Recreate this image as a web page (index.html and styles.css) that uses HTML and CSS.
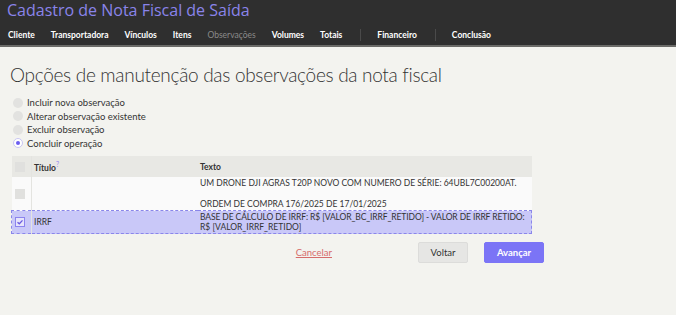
FILE: index.html
```html
<!DOCTYPE html>
<html lang="pt-BR">
<head>
    <meta charset="UTF-8">
    <meta name="viewport" content="width=device-width, initial-scale=1.0">
    <title>Cadastro de Nota Fiscal de Saída</title>
    <link rel="stylesheet" href="styles.css">
</head>
<body>
    <div class="topbar">
        <div class="app-title">Cadastro de Nota Fiscal de Saída</div>
        <nav class="tabs">
            <a class="tab">Cliente</a>
            <a class="tab">Transportadora</a>
            <a class="tab">Vínculos</a>
            <a class="tab">Itens</a>
            <a class="tab current">Observações</a>
            <a class="tab">Volumes</a>
            <a class="tab">Totais</a>
            <span class="sep"></span>
            <a class="tab">Financeiro</a>
            <span class="sep"></span>
            <a class="tab">Conclusão</a>
        </nav>
    </div>

    <div class="content">
        <h1>Opções de manutenção das observações da nota fiscal</h1>

        <div class="options">
            <label class="option"><span class="radio"></span>Incluir nova observação</label>
            <label class="option"><span class="radio"></span>Alterar observação existente</label>
            <label class="option"><span class="radio"></span>Excluir observação</label>
            <label class="option"><span class="radio on"></span>Concluir operação</label>
        </div>

        <table class="grid">
            <thead>
                <tr>
                    <th class="chk"><span class="box"></span></th>
                    <th class="col-title">Título<sup>?</sup></th>
                    <th>Texto</th>
                </tr>
            </thead>
            <tbody>
                <tr>
                    <td class="chk"><span class="box"></span></td>
                    <td></td>
                    <td>UM DRONE DJI AGRAS T20P NOVO COM NUMERO DE SÉRIE: 64UBL7C00200AT.<br><br>ORDEM DE COMPRA 176/2025 DE 17/01/2025</td>
                </tr>
                <tr class="selected">
                    <td class="chk"><span class="box checked">
                        <svg width="8" height="8" viewBox="0 0 8 8"><path d="M1.5 4.2 L3.3 5.8 L6.5 2.4" fill="none" stroke="#6a5ae0" stroke-width="1.3"/></svg>
                    </span></td>
                    <td>IRRF</td>
                    <td><span class="nowrap">BASE DE CÁLCULO DE IRRF: R$ [VALOR_BC_IRRF_RETIDO] - VALOR DE IRRF RETIDO:</span><br>R$ [VALOR_IRRF_RETIDO]</td>
                </tr>
            </tbody>
        </table>

        <div class="actions">
            <a class="cancel">Cancelar</a>
            <button class="btn back">Voltar</button>
            <button class="btn next">Avançar</button>
        </div>
    </div>
</body>
</html>
```

FILE: styles.css
```css
body {
    margin: 0;
    background-color: #f3f3ef;
    font-family: "Lato", "Open Sans", sans-serif;
    color: #333;
}
.topbar {
    background-color: #2f2f2f;
    border-bottom: 2px solid #6b6b68;
    height: 45px;
}
.app-title {
    color: #8a84ea;
    font-family: "Open Sans", sans-serif;
    font-size: 16px;
    line-height: 20px;
    padding-left: 7px;
    height: 24px;
}
.tabs {
    display: flex;
    align-items: center;
    padding-left: 8px;
    height: 22px;
}
.tab {
    color: #fff;
    font-size: 8.5px;
    font-weight: bold;
    margin-right: 16px;
}
.tab.current {
    color: #8a8a8a;
    font-weight: normal;
}
.sep {
    width: 1px;
    height: 12px;
    background-color: #4a4a4a;
    margin-left: 2px;
    margin-right: 16px;
}
.content {
    padding: 0 10px;
}
h1 {
    font-weight: 300;
    font-size: 19px;
    margin: 16px 0 10px 0;
    color: #333;
    letter-spacing: -0.3px;
}
.options {
    display: flex;
    flex-direction: column;
    margin-left: 3px;
}
.option {
    display: flex;
    align-items: center;
    font-size: 9.5px;
    height: 13.5px;
    color: #333;
}
.radio {
    width: 10px;
    height: 10px;
    border-radius: 50%;
    background-color: #e2e2e0;
    margin-right: 4px;
    box-sizing: border-box;
}
.radio.on {
    background-color: #fff;
    border: 1px solid #c9c6f2;
    position: relative;
}
.radio.on::after {
    content: "";
    position: absolute;
    left: 2px;
    top: 2px;
    width: 4px;
    height: 4px;
    border-radius: 50%;
    background-color: #6b5df0;
}
.grid {
    width: 521px;
    margin-top: 6px;
    margin-left: 1px;
    border-collapse: collapse;
    font-size: 8.5px;
}
.grid th {
    background-color: #e8e8e4;
    text-align: left;
    font-weight: bold;
    height: 21px;
    padding: 0 0 0 2px;
    color: #333;
}
.grid td {
    background-color: #fafafa;
    padding: 0 0 0 2px;
    line-height: 10.5px;
    vertical-align: middle;
}
.nowrap {
    white-space: nowrap;
    letter-spacing: -0.1px;
}
.grid tbody tr:first-child td {
    height: 33px;
}
.grid .chk {
    width: 16px;
    padding-left: 3px;
    border-right: 1px solid #e4e4e0;
}
.col-title {
    width: 164px;
}
.grid sup {
    color: #9a8cf0;
    font-size: 7px;
    font-weight: normal;
}
.box {
    display: block;
    width: 10px;
    height: 10px;
    background-color: #e0e0de;
    box-sizing: border-box;
}
.box.checked {
    background-color: #e6e4fb;
    border: 1px solid #8c84ee;
    display: flex;
    align-items: center;
    justify-content: center;
}
.grid tr.selected td {
    background-color: #c9c8f8;
    border-top: 1px dashed #8a86ea;
    border-bottom: 1px dashed #8a86ea;
    height: 22px;
}
.grid tr.selected td:first-child {
    border-left: 1px dashed #8a86ea;
}
.grid tr.selected td:last-child {
    border-right: 1px dashed #8a86ea;
}
.actions {
    display: flex;
    align-items: center;
    justify-content: flex-end;
    width: 534px;
    margin-top: 8px;
}
.cancel {
    color: #d66c6c;
    text-decoration: underline;
    font-size: 9.5px;
    margin-right: 86px;
}
.btn {
    font-family: "Lato", sans-serif;
    font-size: 9.5px;
    height: 21px;
    border: 1px solid #dcdcda;
    border-radius: 2px;
    cursor: pointer;
}
.back {
    width: 50px;
    background-color: #e6e6e4;
    color: #333;
    margin-right: 16px;
}
.next {
    width: 60px;
    background-color: #7b74f6;
    border-color: #7b74f6;
    color: #fff;
    font-weight: bold;
}
```
